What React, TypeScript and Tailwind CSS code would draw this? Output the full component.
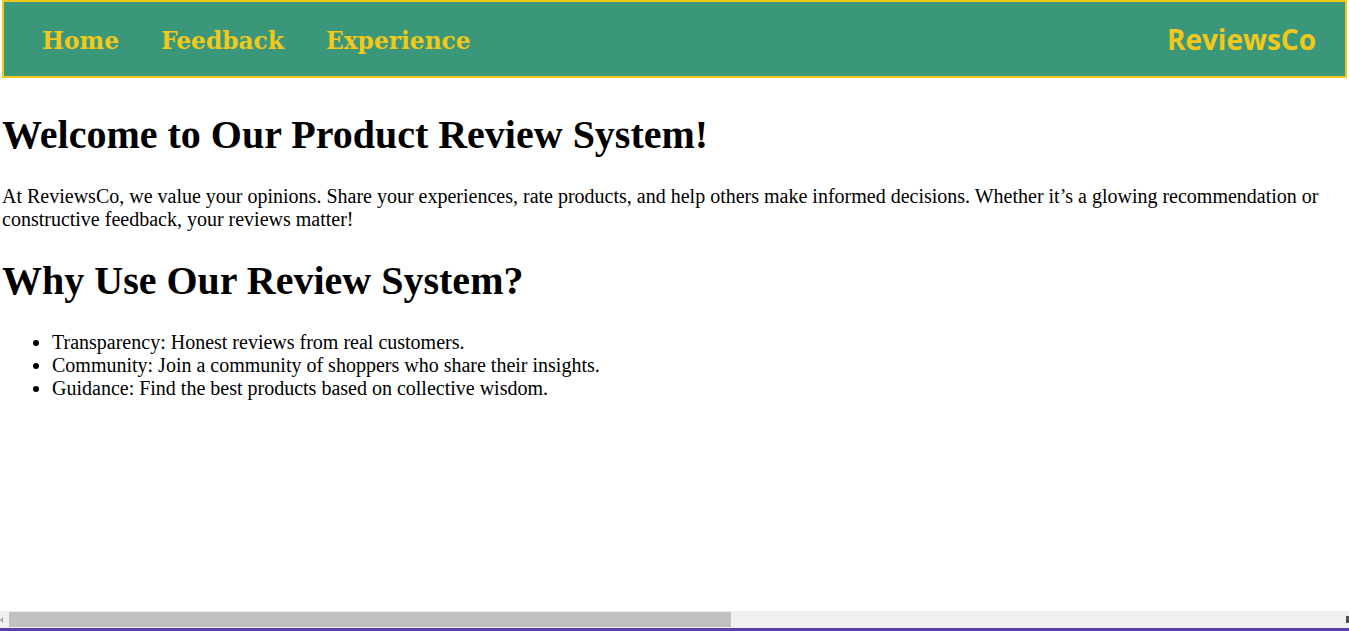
import React from 'react';

const navLinks = ['Home', 'Feedback', 'Experience'];

const reasons = [
  'Transparency: Honest reviews from real customers.',
  'Community: Join a community of shoppers who share their insights.',
  'Guidance: Find the best products based on collective wisdom.',
];

export default function App() {
  return (
    <div className="min-h-screen bg-white text-black px-[2px] font-['Liberation_Serif','Times_New_Roman',serif]">
      {/* Barre de navigation */}
      <nav className="h-[78px] flex items-center justify-between border-2 border-[#f4c81a] bg-[#3a9779] pl-[38px] pr-[29px]">
        <ul className="flex items-center gap-[42px] pt-[5px]">
          {navLinks.map((link) => (
            <li key={link}>
              <a
                href="#"
                className="font-['DejaVu_Serif',Georgia,serif] text-[23.3px] font-bold text-[#f4c81a]"
              >
                {link}
              </a>
            </li>
          ))}
        </ul>
        <span className="font-['Open_Sans',sans-serif] text-[28px] font-bold text-[#f4c81a]">
          ReviewsCo
        </span>
      </nav>

      {/* Contenu */}
      <main>
        <h1 className="mt-[34px] mb-[27px] text-[40px] font-bold leading-[46px]">
          Welcome to Our Product Review System!
        </h1>
        <p className="text-[20px] leading-[23px]">
          At ReviewsCo, we value your opinions. Share your experiences, rate products, and help
          others make informed decisions. Whether it’s a glowing recommendation or constructive
          feedback, your reviews matter!
        </p>
        <h2 className="mt-[27px] mb-[27px] text-[40px] font-bold leading-[46px]">
          Why Use Our Review System?
        </h2>
        <ul className="list-disc pl-[50px] text-[20px] leading-[23px]">
          {reasons.map((r) => (
            <li key={r}>{r}</li>
          ))}
        </ul>
      </main>

      {/* Barre de défilement + liseré */}
      <div className="fixed bottom-0 left-0 right-0">
        <div className="h-[17px] bg-[#f0f0f0] flex items-center">
          <div className="w-[9px] flex justify-start">
            <div className="w-0 h-0 border-y-[3px] border-y-transparent border-r-[3px] border-r-[#a3a3a3]" />
          </div>
          <div className="w-[722px] h-[15px] bg-[#c1c1c1]" />
          <div className="flex-1" />
          <div className="w-[3px] h-[7px] bg-[#505050]" />
        </div>
        <div className="h-[3px] bg-[#5b3ea6]" />
      </div>
    </div>
  );
}
